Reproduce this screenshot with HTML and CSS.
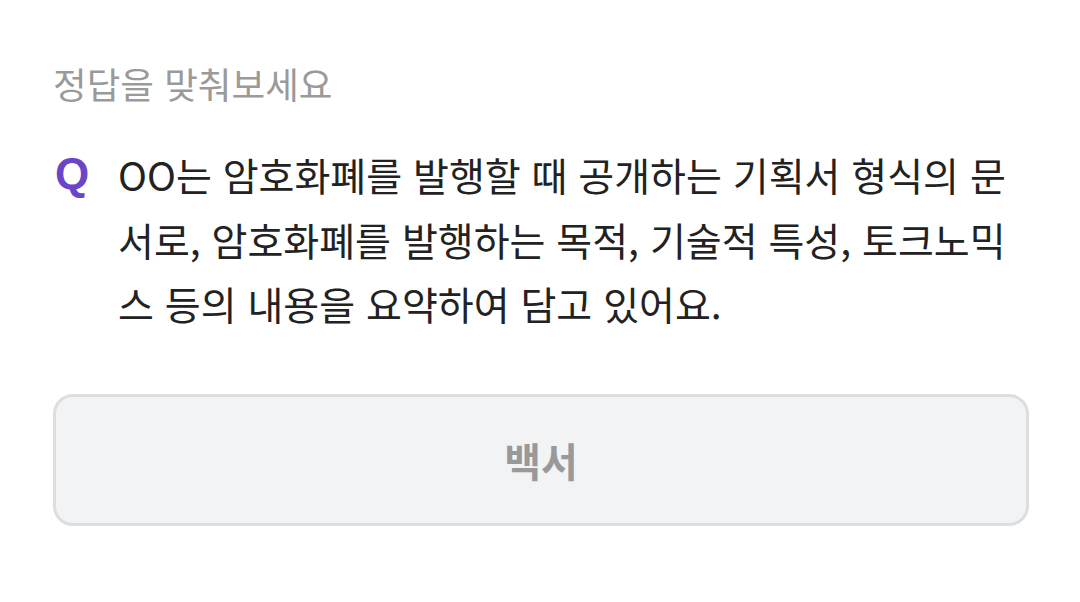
FILE: index.html
```html
<!DOCTYPE html>
<html lang="ko">
<head>
  <meta charset="UTF-8" />
  <meta name="viewport" content="width=device-width, initial-scale=1.0">
  <title>정답을 맞춰보세요</title>
  <link rel="stylesheet" href="styles.css">
</head>
<body>

<div class="quiz">
  <div class="label">정답을 맞춰보세요</div>

  <div class="question">
    <span class="q-mark">Q</span>
    <p class="q-text">OO는 암호화폐를 발행할 때 공개하는 기획서 형식의 문서로, 암호화폐를 발행하는 목적, 기술적 특성, 토크노믹스 등의 내용을 요약하여 담고 있어요.</p>
  </div>

  <button class="answer">백서</button>
</div>

</body>
</html>
```

FILE: styles.css
```css
* { margin: 0; padding: 0; box-sizing: border-box; }
html, body {
  height: 100%;
  background: #fff;
  font-family: "Noto Sans CJK KR", "Noto Sans", sans-serif;
}

.quiz {
  padding: 60px 51px 0 53px;
}

.label {
  color: #9a9a9a;
  font-size: 36.6px;
  line-height: 48px;
}

.question {
  display: flex;
  align-items: flex-start;
  margin-top: 34px;
}

.q-mark {
  flex: none;
  width: 65px;
  padding-left: 2px;
  color: #6b45c8;
  font-family: "Liberation Sans", Arial, sans-serif;
  font-weight: 700;
  font-size: 44px;
  line-height: 64.5px;
}

.q-text {
  color: #222;
  font-size: 39px;
  line-height: 64.5px;
}

.answer {
  display: block;
  width: 100%;
  height: 132px;
  margin-top: 58px;
  background: #f2f3f5;
  border: 3px solid #dcdee0;
  border-radius: 20px;
  color: #999;
  font-family: inherit;
  font-size: 40px;
  font-weight: 700;
}
```
